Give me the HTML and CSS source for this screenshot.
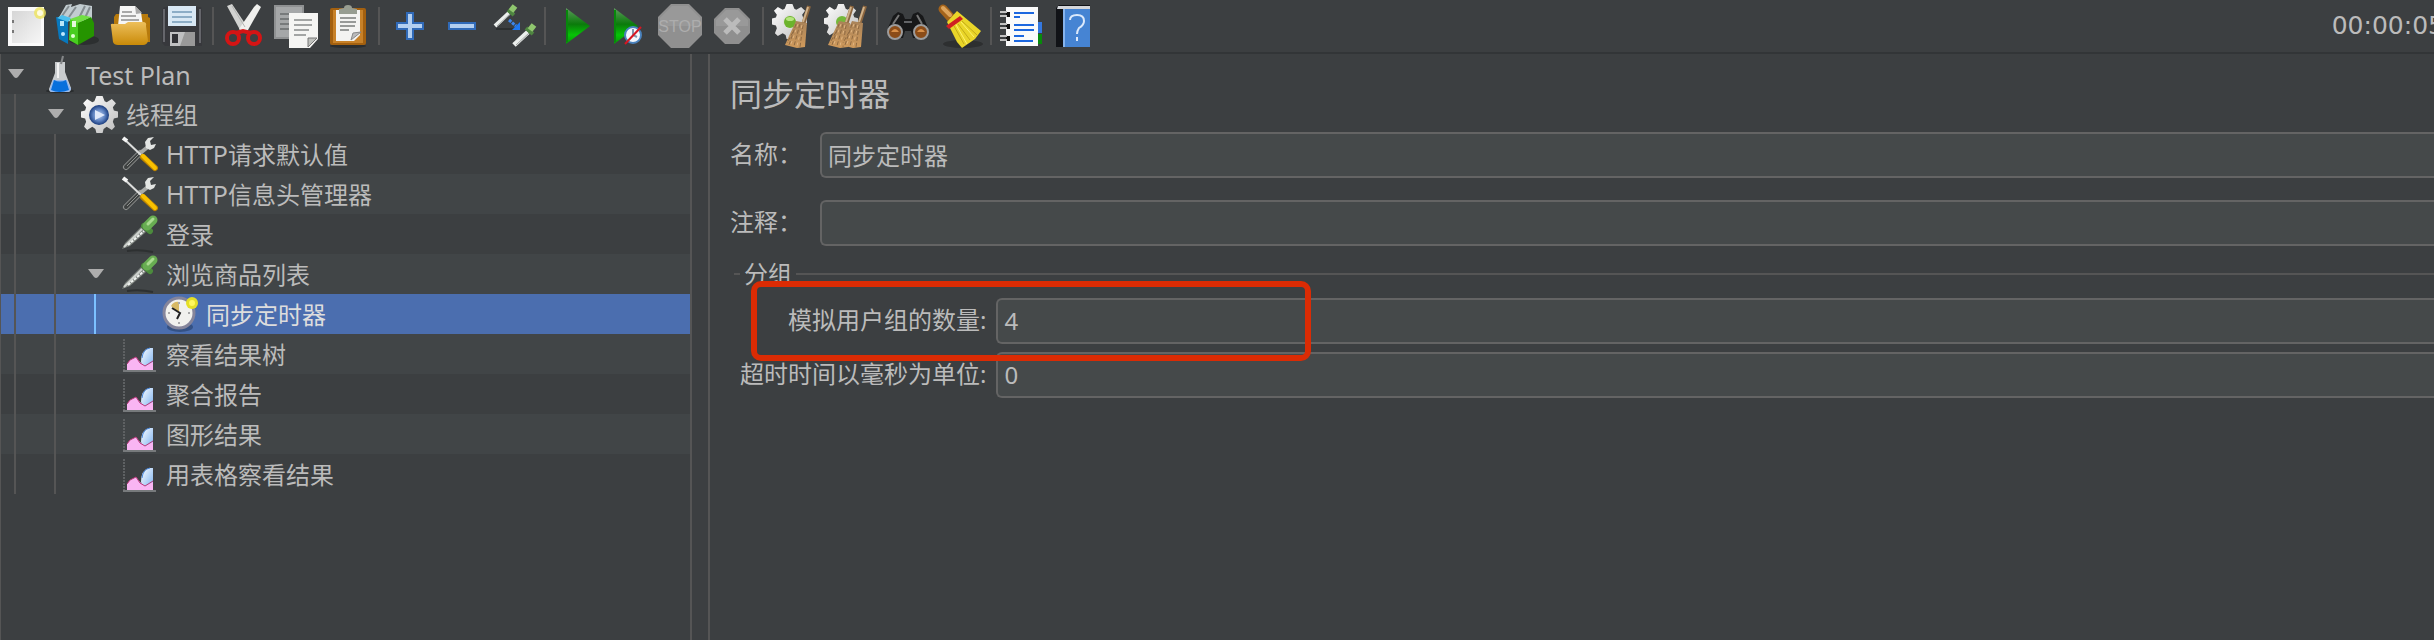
FILE: index.html
```html
<!DOCTYPE html>
<html lang="zh-CN">
<head>
    <meta charset="UTF-8">
    <meta name="viewport" content="width=device-width, initial-scale=1.0">
    <title>同步定时器 - Test Plan</title>
    <link rel="stylesheet" href="styles.css">
</head>
<body>
    <!-- Shared icons -->
    <svg class="defs" aria-hidden="true">
        <defs>
            <linearGradient id="paper" x1="0" y1="0" x2="1" y2="1"><stop offset="0" stop-color="#d6d6d6"/><stop offset="1" stop-color="#f6f6f6"/></linearGradient>
            <linearGradient id="gold" x1="0" y1="0" x2="0" y2="1"><stop offset="0" stop-color="#edbf5b"/><stop offset="1" stop-color="#c98a08"/></linearGradient>
            <linearGradient id="green" x1="0" y1="0" x2="0" y2="1"><stop offset="0" stop-color="#5d9c5c"/><stop offset=".45" stop-color="#0b7a0b"/><stop offset=".75" stop-color="#06c406"/><stop offset="1" stop-color="#079307"/></linearGradient>
            <linearGradient id="metal" x1="0" y1="0" x2="1" y2="1"><stop offset="0" stop-color="#fff"/><stop offset="1" stop-color="#bdbdbd"/></linearGradient>
            <linearGradient id="straw" x1="0" y1="0" x2="0" y2="1"><stop offset="0" stop-color="#a98359"/><stop offset="1" stop-color="#d09a5b"/></linearGradient>
            <linearGradient id="ice" x1="0" y1="0" x2="1" y2="1"><stop offset="0" stop-color="#fff"/><stop offset="1" stop-color="#78b0f0"/></linearGradient>
            <radialGradient id="ball"><stop offset="0" stop-color="#b9cdf0"/><stop offset=".6" stop-color="#5c80bf"/><stop offset="1" stop-color="#183a7c"/></radialGradient>
        </defs>
        <symbol id="arrow" viewBox="0 0 16 10"><path d="M0 0H16L10 8Q8 10 6 8Z" fill="#adadad"/></symbol>
        <symbol id="cog" viewBox="-18 -18 36 36">
            <path d="M-3-18H3L5-13L7-12L12-15L16-11L13-7L14-4L18-3V3L14 4L13 7L15 12L12 15L7 12L4 14L3 18H-3L-4 14L-7 12L-12 15L-15 12L-13 7L-14 4L-18 3V-3L-14-4L-13-7L-16-11L-12-15L-7-12L-5-13Z" fill="url(#metal)"/>
        </symbol>
        <symbol id="tools" viewBox="0 0 40 40">
            <path d="M5 33L19 19" stroke="#8f918f" stroke-width="6" stroke-linecap="round"/>
            <path d="M5 33L19 19" stroke="#3f4242" stroke-width="4" stroke-linecap="round"/>
            <path d="M6 32L20 18" stroke="#8f918f" stroke-width="1"/>
            <path d="M18 20L28 12" stroke="#a8aaa8" stroke-width="4"/>
            <path d="M25 14L24 8L27 4L33 3L29 7L30 11L35 10L33 14L29 16Z" fill="#e3e5e3"/>
            <path d="M3 5L20 21" stroke="#dcdddc" stroke-width="2"/>
            <path d="M2 4L6 7" stroke="#f5f5f5" stroke-width="4"/>
            <path d="M22 23L34 34" stroke="#bd8500" stroke-width="6" stroke-linecap="round"/>
            <path d="M22 22L34 34" stroke="#f9c000" stroke-width="4" stroke-linecap="round"/>
        </symbol>
        <symbol id="dropper" viewBox="0 0 40 40">
            <path d="M6 37Q18 35 32 38" stroke="#2d3031" stroke-width="2" fill="none"/>
            <path d="M1 35L4 29L20 13L25 18L9 32Z" fill="#7b807c"/>
            <path d="M3 33L21 15" stroke="#d0d4d0" stroke-width="2"/>
            <path d="M7 31L23 17" stroke="#f0f3f0" stroke-width="2" stroke-dasharray="3 1"/>
            <path d="M23 12L29 17" stroke="#4c8b3d" stroke-width="6" stroke-linecap="round"/>
            <path d="M26 12L32 6" stroke="#68ad52" stroke-width="9" stroke-linecap="round"/>
            <path d="M27 10L32 5" stroke="#a9da8f" stroke-width="3" stroke-linecap="round"/>
        </symbol>
        <symbol id="chart" viewBox="0 0 40 40">
            <path d="M3 5V36" stroke="#5e6163" stroke-width="2" stroke-dasharray="2 1"/>
            <path d="M2 37H35" stroke="#777a7c" stroke-width="2"/>
            <path d="M20 28Q20 16 28 14H32V35H23Z" fill="url(#ice)"/>
            <path d="M21 24Q22 15 29 14" stroke="#4483d9" stroke-width="1" fill="none"/>
            <path d="M6 36V30L9 26L15 23L19 28L24 32L32 28V36Z" fill="#f9b5f3"/>
            <path d="M6 30L9 26L15 23L19 29L24 32L32 27" stroke="#b9387a" stroke-width="1" fill="none"/>
        </symbol>
        <symbol id="besom" viewBox="0 0 28 44">
            <path d="M26 2L20 21" stroke="#8c663f" stroke-width="4"/>
            <path d="M25 3L20 18" stroke="#d1b38b" stroke-width="2"/>
            <path d="M13 17L24 19L22 43L14 44L2 41L6 32Z" fill="url(#straw)"/>
            <path d="M13 20L6 41M17 20L11 42M20 21L17 43M10 28L4 39" stroke="#8f6a43" stroke-dasharray="4 2"/>
            <path d="M15 20L8 40M19 21L14 42" stroke="#e2b682" stroke-dasharray="3 3"/>
        </symbol>
    </svg>

    <!-- Toolbar -->
    <header class="toolbar">
        <button class="tool" aria-label="新建"><svg viewBox="0 0 48 48">
            <path d="M6 5H42V44H6Z" fill="#fafafa"/><path d="M10 9H39V41H10Z" fill="url(#paper)"/>
            <path d="M10 18h2v3h-2zM10 28h2v3h-2z" fill="#777"/>
            <circle cx="38" cy="11" r="6" fill="#efe55c" opacity=".8"/><circle cx="38" cy="11" r="3" fill="#fffce0"/>
        </svg></button>
        <button class="tool" aria-label="模板"><svg viewBox="0 0 48 48">
            <ellipse cx="30" cy="38" rx="15" ry="5" fill="#2c2f30"/>
            <path d="M4 17L12 3L18 2L17 5L26 2L38 4V19L20 20Z" fill="#c2ccd0"/><path d="M8 14L15 4M15 15L22 5M25 16L31 4M31 16L36 5" stroke="#858d91" stroke-width="2"/>
            <path d="M2 15L14 17V42L5 37Z" fill="#0878bd"/><path d="M3 16L8 13L17 16L14 20Z" fill="#4cc0ee"/><path d="M6 19h4v5h-4z" fill="#b9e7fa"/><circle cx="9" cy="32" r="2" fill="#bfe8ff"/>
            <path d="M16 17L24 20V43L15 38Z" fill="#48cd20"/><path d="M24 21L37 15L40 21V34L24 43Z" fill="#259400"/><path d="M16 17L28 13L37 15L24 21Z" fill="#70df43"/>
            <path d="M18 19h4v6h-4z" fill="#e5f8dd"/><circle cx="19" cy="34" r="2" fill="#e1ffd4"/>
        </svg></button>
        <button class="tool" aria-label="打开"><svg viewBox="0 0 48 48">
            <path d="M8 15L10 12H42V15L44 16V40H8Z" fill="#b77a0c"/>
            <path d="M14 4H29L35 10L37 24H12Z" fill="#f6f6f6"/><path d="M29 4L30 12L36 11Z" fill="#aaa"/><path d="M16 10H26M15 14H30M15 18H33" stroke="#a8a8a8" stroke-width="2"/>
            <path d="M5 24Q4 21 8 22H19L22 20H37Q41 20 40 24L42 39Q41 43 37 43H12Q8 43 7 40Z" fill="url(#gold)"/>
        </svg></button>
        <button class="tool" aria-label="保存"><svg viewBox="0 0 48 48">
            <path d="M6 5H43L44 8V44H7L4 41V8Z" fill="#37383c"/><path d="M6 7V40M42 7V41" stroke="#65666b" stroke-width="2"/>
            <path d="M10 4H38V24H10Z" fill="#d9e8f4"/><path d="M14 10H34M14 15H34M14 20H34" stroke="#8dadc6" stroke-width="2"/>
            <path d="M12 30H37V44H12Z" fill="#bfc0c1"/><path d="M14 32H20V41H14Z" fill="#303135"/><path d="M27 30L22 44H37V30Z" fill="#999"/>
        </svg></button>
        <i class="sep"></i>
        <button class="tool" aria-label="剪切"><svg viewBox="0 0 48 48">
            <path d="M7 4L12 2L28 26L24 31L20 28Z" fill="#d2d3d1"/><path d="M37 2L41 5L28 28L24 31L19 27L34 5Z" fill="#f0f0ee"/><path d="M12 4L25 25" stroke="#b5b6b4"/>
            <circle cx="13" cy="36" r="6" fill="none" stroke="#d51414" stroke-width="4"/><circle cx="34" cy="36" r="6" fill="none" stroke="#d51414" stroke-width="4"/>
            <path d="M16 31L23 29L31 31" stroke="#d51414" stroke-width="4" fill="none"/>
        </svg></button>
        <button class="tool" aria-label="复制"><svg viewBox="0 0 48 48">
            <path d="M2 3H32V37H2Z" fill="#8f9192"/><path d="M4 5H30V35H4Z" fill="#a5a7a8"/><path d="M8 12H26M8 17H26M8 22H20M8 27H18" stroke="#777a7b" stroke-width="2"/>
            <path d="M17 11H46V37L38 46H17Z" fill="#f5f5f3"/><path d="M22 18H40M22 23H40M22 28H37M22 33H34" stroke="#a3a5a4" stroke-width="2"/><path d="M36 45V36H45Z" fill="#bfc1bd" stroke="#777"/>
        </svg></button>
        <button class="tool" aria-label="粘贴"><svg viewBox="0 0 48 48">
            <ellipse cx="24" cy="44" rx="18" ry="2" fill="#2b2d2e"/>
            <rect x="6" y="6" width="36" height="37" rx="2" fill="#a3600f"/><rect x="9" y="8" width="30" height="33" fill="#c78128"/>
            <path d="M12 8H36V33L30 39H12Z" fill="#f3f3f1"/><path d="M16 16H32M16 20H32M16 24H31M16 28H25" stroke="#989a98" stroke-width="2"/><path d="M27 38L29 31L37 30Z" fill="#bbb" stroke="#888"/>
            <path d="M15 12V7L20 6Q20 3 24 3T28 6L33 7V12Z" fill="#979d91"/>
        </svg></button>
        <i class="sep"></i>
        <button class="tool" aria-label="展开"><svg viewBox="0 0 48 48">
            <path d="M21 11H27V21H37V27H27V37H21V27H11V21H21Z" fill="#b3cff0" stroke="#306ab8" stroke-width="2"/>
        </svg></button>
        <button class="tool" aria-label="折叠"><svg viewBox="0 0 48 48">
            <rect x="11" y="21" width="26" height="6" fill="#b3cff0" stroke="#306ab8" stroke-width="2"/>
        </svg></button>
        <button class="tool" aria-label="切换"><svg viewBox="0 0 48 48">
            <path d="M6 27H25" stroke="#2c2f30" stroke-width="2"/>
            <path d="M5 24L19 11" stroke="#ecefed" stroke-width="4"/><path d="M7 24L20 12" stroke="#a2a5a3"/>
            <path d="M18 8L24 13" stroke="#4e8540" stroke-width="4"/><path d="M21 9L25 4" stroke="#8fc66e" stroke-width="6"/>
            <path d="M24 43L38 30" stroke="#ecefed" stroke-width="5"/><path d="M26 43L39 31" stroke="#a2a5a3"/>
            <path d="M36 26L43 32" stroke="#4e8540" stroke-width="4"/><path d="M40 28L44 23" stroke="#8fc66e" stroke-width="6"/>
            <path d="M19 18L26 24" stroke="#3b86ed" stroke-width="3" stroke-dasharray="3 1"/><path d="M22 28L30 20V28Z" fill="#1f78f0"/>
        </svg></button>
        <i class="sep"></i>
        <button class="tool" aria-label="启动"><svg viewBox="0 0 48 48">
            <path d="M14 6L38 24L14 42Z" fill="url(#green)"/><path d="M15 8V40" stroke="#07870b" stroke-width="2"/>
        </svg></button>
        <button class="tool" aria-label="不停顿开始"><svg viewBox="0 0 48 48">
            <path d="M10 6L34 24L10 42Z" fill="url(#green)"/><path d="M11 8V40" stroke="#07870b" stroke-width="2"/>
            <circle cx="29" cy="33" r="8" fill="#f3f7fd" stroke="#4a82bd" stroke-width="2"/><path d="M29 27V33L33 35" stroke="#8296ad" stroke-width="2" fill="none"/><path d="M21 42L37 25" stroke="#d81622" stroke-width="2"/>
        </svg></button>
        <button class="tool" aria-label="停止" disabled><svg viewBox="0 0 48 48">
            <path d="M15 2H33L46 15V33L33 46H15L2 33V15Z" fill="#909090"/><path d="M16 4H32L44 16V24H4V16Z" fill="#999"/>
            <text x="24" y="30" class="stop-text">STOP</text>
        </svg></button>
        <button class="tool" aria-label="关闭" disabled><svg viewBox="0 0 48 48">
            <path d="M17 6H31L42 17V31L31 42H17L6 31V17Z" fill="#8f8f8f"/><path d="M18 8H30L40 18V24H8V18Z" fill="#999"/>
            <path d="M17 17L31 31M31 17L17 31" stroke="#bbb" stroke-width="5"/>
        </svg></button>
        <i class="sep"></i>
        <button class="tool" aria-label="清除"><svg viewBox="0 0 48 48">
            <use href="#cog" x="2" y="2" width="35" height="35"/><circle cx="20" cy="20" r="7" fill="#deded8"/><circle cx="20" cy="20" r="6" fill="#6cb32c"/><ellipse cx="20" cy="17" rx="4" ry="2" fill="#b5e57e"/>
            <use href="#besom" x="13" y="2" width="28" height="44"/>
        </svg></button>
        <button class="tool" aria-label="清除全部"><svg viewBox="0 0 48 48">
            <use href="#cog" x="2" y="2" width="34" height="34"/><circle cx="20" cy="20" r="6" fill="#75b83a"/>
            <use href="#besom" x="4" y="2" width="28" height="44"/><use href="#besom" x="17" y="2" width="28" height="44"/>
        </svg></button>
        <i class="sep"></i>
        <button class="tool" aria-label="查找"><svg viewBox="0 0 48 48">
            <path d="M4 26L9 14L14 10L19 12L21 17H27L29 12L34 10L39 14L44 26L40 36H29L27 29H21L19 36H7Z" fill="#171819"/>
            <path d="M9 22L15 13M38 22L33 13" stroke="#777" stroke-width="2"/><path d="M20 20H28" stroke="#626467" stroke-width="2"/>
            <circle cx="11" cy="30" r="7" fill="#8b4c18" stroke="#9c9c9c" stroke-width="2"/><circle cx="37" cy="30" r="7" fill="#8b4c18" stroke="#9c9c9c" stroke-width="2"/>
            <path d="M7 30Q11 24 15 30ZM33 30Q37 24 41 30Z" fill="#d99048"/>
        </svg></button>
        <button class="tool" aria-label="重置查找"><svg viewBox="0 0 48 48">
            <ellipse cx="27" cy="42" rx="20" ry="4" fill="#2d2f30"/>
            <path d="M7 7L15 16" stroke="#a3631b" stroke-width="9" stroke-linecap="round"/><path d="M7 6L14 13" stroke="#dca35b" stroke-width="4" stroke-linecap="round"/>
            <path d="M11 20L21 9L45 29L39 37L26 46L21 40Z" fill="#ead629"/><path d="M18 24L28 42M22 22L34 38M26 19L41 33" stroke="#c2ab18"/><path d="M19 21L31 42M25 20L38 35" stroke="#fff36e"/>
            <path d="M10 24L24 14L27 17L13 27Z" fill="#cf1f22"/>
        </svg></button>
        <i class="sep"></i>
        <button class="tool" aria-label="函数助手"><svg viewBox="0 0 48 48">
            <path d="M36 20H44V31H36Z" fill="#3478df"/><path d="M36 32H44V42H36Z" fill="#078b0b"/>
            <path d="M8 5H40V44H8Z" fill="#fafafa"/><path d="M16 11H36M16 23H36M16 28H36M16 39H35" stroke="#1c67df" stroke-width="2"/><path d="M16 15H22M16 34H26" stroke="#1c67df" stroke-width="2"/>
            <path d="M8 10h4v5h-4zM8 22h4v5h-4zM8 34h4v5h-4z" fill="#111"/><path d="M2 10H9M2 14H9M2 22H9M2 26H9M2 34H9M2 38H9" stroke="#c2c2c2" stroke-width="2"/>
        </svg></button>
        <button class="tool" aria-label="帮助"><svg viewBox="0 0 48 48">
            <path d="M6 6L9 3H40V45H6Z" fill="#111317"/><path d="M8 4H40V7H7Z" fill="#d4d6da"/><path d="M14 7H40V45H14Z" fill="#4684d3"/><path d="M14 7V45" stroke="#86b3ec" stroke-width="2"/>
            <path d="M20 18Q20 13 27 13T34 19Q34 23 29 26Q27 29 27 32M27 35V39" stroke="#dce9fb" stroke-width="2" fill="none"/>
        </svg></button>
        <span class="timer">00:00:05</span>
    </header>

    <div class="workspace">
        <!-- Test plan tree -->
        <nav class="tree">
            <ul>
                <li class="node"><span class="toggle"><svg><use href="#arrow"/></svg></span>
                    <svg class="icon" viewBox="0 0 40 40">
                        <ellipse cx="19" cy="37" rx="14" ry="2" fill="#292c2e"/>
                        <path d="M14 8H24V18L30 34Q30 38 27 38H11Q8 38 8 35L14 19Z" fill="#c9ccce"/><path d="M12 26H26L30 35Q29 38 27 38H11Q8 38 9 34Z" fill="#96b9ed"/>
                        <path d="M13 26L10 36Q18 40 28 36L25 26Q19 29 13 26Z" fill="#0870dc"/><path d="M17 9V24" stroke="#f2f2f2" stroke-width="2"/><path d="M20 10L22 2" stroke="#858789" stroke-width="2"/>
                    </svg>
                    <span class="name latin">Test Plan</span></li>
                <li class="node"><i class="guide"></i><span class="toggle"><svg><use href="#arrow"/></svg></span>
                    <svg class="icon" viewBox="0 0 40 40">
                        <use href="#cog" x="0" y="2" width="37" height="37"/><circle cx="18" cy="21" r="10" fill="url(#ball)"/><path d="M14 16L24 21L14 26Z" fill="#dfe8fa"/>
                    </svg>
                    <span class="name">线程组</span></li>
                <li class="node"><i class="guide"></i><i class="guide"></i><span class="toggle"></span><svg class="icon"><use href="#tools"/></svg><span class="name"><span class="latin">HTTP</span>请求默认值</span></li>
                <li class="node"><i class="guide"></i><i class="guide"></i><span class="toggle"></span><svg class="icon"><use href="#tools"/></svg><span class="name"><span class="latin">HTTP</span>信息头管理器</span></li>
                <li class="node"><i class="guide"></i><i class="guide"></i><span class="toggle"></span><svg class="icon"><use href="#dropper"/></svg><span class="name">登录</span></li>
                <li class="node"><i class="guide"></i><i class="guide"></i><span class="toggle"><svg><use href="#arrow"/></svg></span><svg class="icon"><use href="#dropper"/></svg><span class="name">浏览商品列表</span></li>
                <li class="node selected"><i class="guide"></i><i class="guide"></i><i class="guide active"></i><span class="toggle"></span>
                    <svg class="icon" viewBox="0 0 40 40">
                        <ellipse cx="19" cy="33" rx="13" ry="5" fill="#345184"/>
                        <circle cx="18" cy="19" r="15" fill="#f1f1ee" stroke="#85859b" stroke-width="3"/><path d="M18 19L10 12Q13 7 18 8Z" fill="#d7b965"/>
                        <path d="M11 14L19 19L16 25" stroke="#222" stroke-width="2" fill="none"/><path d="M18 8V10M29 19H27M18 30V28M7 19H9" stroke="#aaa" stroke-width="2"/>
                        <circle cx="31" cy="9" r="6" fill="#e5df26"/><circle cx="31" cy="9" r="3" fill="#fff85d"/>
                    </svg>
                    <span class="name">同步定时器</span></li>
                <li class="node"><i class="guide"></i><i class="guide"></i><span class="toggle"></span><svg class="icon"><use href="#chart"/></svg><span class="name">察看结果树</span></li>
                <li class="node"><i class="guide"></i><i class="guide"></i><span class="toggle"></span><svg class="icon"><use href="#chart"/></svg><span class="name">聚合报告</span></li>
                <li class="node"><i class="guide"></i><i class="guide"></i><span class="toggle"></span><svg class="icon"><use href="#chart"/></svg><span class="name">图形结果</span></li>
                <li class="node"><i class="guide"></i><i class="guide"></i><span class="toggle"></span><svg class="icon"><use href="#chart"/></svg><span class="name">用表格察看结果</span></li>
            </ul>
        </nav>

        <!-- Timer settings -->
        <main class="panel">
            <h1>同步定时器</h1>
            <form>
                <div class="row">
                    <label for="name">名称：</label>
                    <input type="text" id="name" value="同步定时器">
                </div>
                <div class="row">
                    <label for="comment">注释：</label>
                    <input type="text" id="comment">
                </div>
                <fieldset class="group">
                    <legend>分组</legend>
                    <div class="group-fields">
                        <label for="groupSize">模拟用户组的数量:</label>
                        <input type="text" id="groupSize" value="4">
                        <label for="timeout">超时时间以毫秒为单位:</label>
                        <input type="text" id="timeout" value="0">
                        <div class="highlight"></div>
                    </div>
                </fieldset>
            </form>
        </main>
    </div>
</body>
</html>
```
FILE: styles.css
```css
/* Reset and Base Styles */
* {
    margin: 0;
    padding: 0;
    box-sizing: border-box;
}
body {
    display: flex;
    flex-direction: column;
    min-height: 100vh;
    overflow: hidden;
    background-color: #3c3f41;
    color: #bbb;
    font-family: "Noto Sans", "Noto Sans CJK SC", sans-serif;
    font-size: 24px;
    line-height: 32px;
}
.defs {
    position: absolute;
    width: 0;
    height: 0;
}
.latin {
    font-size: 25px;
}

/* Toolbar */
.toolbar {
    display: flex;
    align-items: center;
    height: 54px;
    border-bottom: 2px solid #323537;
}
.tool {
    flex: none;
    width: 52px;
    height: 52px;
    padding: 2px;
    border: none;
    background: none;
}
.tool svg {
    display: block;
    width: 48px;
    height: 48px;
}
.stop-text {
    fill: #adadad;
    font-family: "Liberation Sans", sans-serif;
    font-size: 16px;
    text-anchor: middle;
}
.sep {
    flex: none;
    width: 2px;
    height: 38px;
    margin: 0 4px;
    background: #555;
}
.timer {
    margin-left: auto;
    margin-right: -10px;
    font-family: "DejaVu Sans", sans-serif;
    font-size: 25px;
}

/* Tree */
.workspace {
    display: flex;
    flex: 1;
}
.tree {
    flex: none;
    width: 692px;
    border-left: 1px solid #555;
    border-right: 2px solid #555;
}
.tree ul {
    list-style: none;
}
.node {
    display: flex;
    align-items: center;
    height: 40px;
}
.node:nth-child(even) {
    background: #414547;
}
.node.selected {
    background: #4b6eaf;
}
.guide {
    width: 40px;
    height: 40px;
    border-left: 13px solid transparent;
    background: linear-gradient(#555, #555) 0 0 / 2px 100% no-repeat;
}
.guide.active {
    background-image: linear-gradient(#7cc0ff, #7cc0ff);
}
.toggle {
    width: 40px;
    padding-left: 7px;
}
.toggle svg {
    display: block;
    width: 16px;
    height: 10px;
}
.icon {
    flex: none;
    width: 40px;
    height: 40px;
}
.name {
    padding: 2px 0 0 5px;
}
.name .latin {
    line-height: 24px;
}
.selected .name {
    color: #ddd;
}

/* Settings panel */
.panel {
    flex: 1;
    margin-left: 16px;
    padding: 20px 0 0 20px;
    border-left: 2px solid #555;
}
h1 {
    margin-bottom: 18px;
    font-size: 32px;
    font-weight: normal;
    line-height: 40px;
}
.row {
    display: flex;
    align-items: center;
    margin-bottom: 22px;
}
.row label {
    flex: none;
    width: 90px;
    padding-bottom: 2px;
}
input {
    width: 100%;
    height: 46px;
    padding: 0 6px 2px;
    border: 2px solid #646464;
    border-right: none;
    border-radius: 6px 0 0 6px;
    background: #45494a;
    color: #bbb;
    font: inherit;
    outline: none;
}
.group {
    margin: -10px 0 0 4px;
    padding-left: 6px;
    border: none;
    border-top: 2px solid #555;
}
.group legend {
    padding: 0 4px;
}
.group-fields {
    position: relative;
    display: grid;
    grid-template-columns: max-content 1fr;
    align-items: center;
    gap: 8px 10px;
    padding-top: 8px;
}
.group-fields label {
    padding-bottom: 2px;
    text-align: right;
}

/* Red frame over the group size field */
.highlight {
    position: absolute;
    top: -9px;
    left: 11px;
    width: 560px;
    height: 80px;
    border: 6px solid #db2b04;
    border-radius: 10px;
}
```
